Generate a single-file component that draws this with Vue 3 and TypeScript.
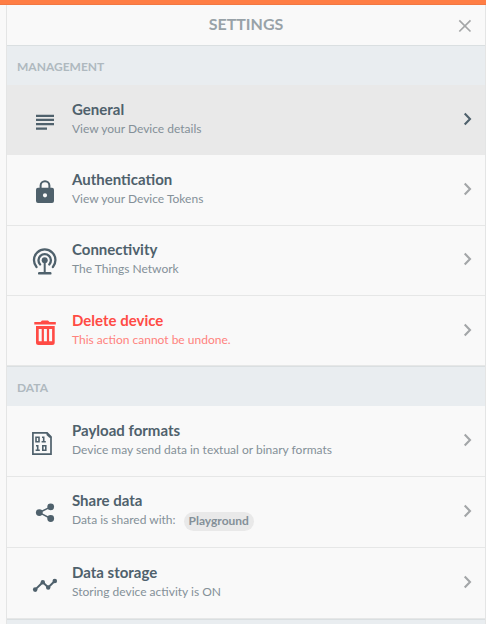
<script setup lang="ts">
interface Item {
  id: string
  title: string
  text: string
  height: number
  top: number
  badge?: string
  active?: boolean
  danger?: boolean
}

interface Group {
  label: string
  items: Item[]
}

const groups: Group[] = [
  {
    label: 'Management',
    items: [
      { id: 'general', title: 'General', text: 'View your Device details', height: 70, top: 15, active: true },
      { id: 'auth', title: 'Authentication', text: 'View your Device Tokens', height: 71, top: 15 },
      { id: 'connectivity', title: 'Connectivity', text: 'The Things Network', height: 70, top: 14 },
      { id: 'delete', title: 'Delete device', text: 'This action cannot be undone.', height: 70, top: 15, danger: true },
    ],
  },
  {
    label: 'Data',
    items: [
      { id: 'payload', title: 'Payload formats', text: 'Device may send data in textual or binary formats', height: 71, top: 15 },
      { id: 'share', title: 'Share data', text: 'Data is shared with:', height: 71, top: 14, badge: 'Playground' },
      { id: 'storage', title: 'Data storage', text: 'Storing device activity is ON', height: 71, top: 15 },
    ],
  },
]
</script>

<template>
  <div class="page">
    <div class="accent"></div>
    <main class="panel">
      <header class="header">
        <h1>SETTINGS</h1>
        <svg class="close" width="14" height="14" viewBox="0 0 14 14">
          <path d="M1.3 1.3 12.5 12.5M12.5 1.3 1.3 12.5" />
        </svg>
      </header>
      <section v-for="group in groups" :key="group.label">
        <h2 class="label">{{ group.label }}</h2>
        <div
          v-for="item in group.items"
          :key="item.id"
          class="row"
          :class="[item.id, { active: item.active, danger: item.danger }]"
          :style="{ height: item.height + 'px' }"
        >
          <svg class="icon" width="32" height="40" viewBox="0 0 32 40">
            <path v-if="item.id === 'general'" d="M8 12.7h18v2.2H8zM8 16.8h18V19H8zM8 21.1h18v2.2H8zM8 25.6h11v2.2H8z" />
            <g v-else-if="item.id === 'auth'">
              <path class="line" d="M12.6 17v-3.4a4.4 4.4 0 0 1 8.8 0V17" />
              <path fill-rule="evenodd" d="M10 15.7h14a2 2 0 0 1 2 2v11.2a2 2 0 0 1-2 2H10a2 2 0 0 1-2-2V17.7a2 2 0 0 1 2-2zm7 5.5a2.1 2.1 0 1 0 0 4.2 2.1 2.1 0 0 0 0-4.2z" />
            </g>
            <g v-else-if="item.id === 'connectivity'">
              <path class="line wide" d="M8.5 24A10.7 10.7 0 1 1 24.9 24" />
              <path class="line wide" d="M12.1 21.5A6.2 6.2 0 1 1 21.3 21.5" />
              <circle cx="16.7" cy="17.3" r="3" />
              <path d="M15.7 18h2v11h-2z" />
              <rect x="10" y="29" width="13.5" height="2.6" rx="1.2" />
            </g>
            <g v-else-if="item.id === 'delete'">
              <path d="M14 7.5h6l1.5 1.5h6.3v2.5H6.3V9h6.2z" />
              <path fill-rule="evenodd" d="M8 13h18.7v16.5a2.5 2.5 0 0 1-2.5 2.5H10.5A2.5 2.5 0 0 1 8 29.5zm2.700 3v12.300h3V16zm5.200 0v12.300h3V16zm5.200 0v12.300h3V16z" />
            </g>
            <g v-else-if="item.id === 'payload'">
              <path class="line thin" d="M4.900 9.900h14.200l3.900 3.900v17.300H4.900z" />
              <path d="M18.500 9.500 23.700 14.700h-2.400l-2.800-2.800z" />
              <path class="line bits" d="M8 14.200h3v4.600H8zM14 14.200h1.700v4.600M13.600 18.800h4.200M8 22.700h1.700v4.600M7.600 27.300h4.200M14.800 22.700h3v4.600h-3z" />
            </g>
            <g v-else-if="item.id === 'share'">
              <path class="line link" d="M22.700 12.800 11.300 18.600 22.700 24.500" />
              <circle cx="11.300" cy="18.600" r="3.400" />
              <circle cx="22.700" cy="12.800" r="3.400" />
              <circle cx="22.700" cy="24.500" r="3.400" />
            </g>
            <g v-else>
              <path class="line" d="M7.200 24.600 14.800 17.200 20.200 22.400 26.800 16" />
              <circle cx="7.200" cy="24.600" r="2.300" />
              <circle cx="14.800" cy="17.200" r="2.200" />
              <circle cx="20.200" cy="22.500" r="2.200" />
              <circle cx="26.800" cy="16" r="2.300" />
            </g>
          </svg>
          <div class="copy" :style="{ paddingTop: item.top + 'px' }">
            <h3>{{ item.title }}</h3>
            <p>{{ item.text }}<span v-if="item.badge" class="badge">{{ item.badge }}</span></p>
          </div>
          <svg class="chevron" width="9" height="14" viewBox="0 0 9 14">
            <path d="M1.700 1.500 7 7 1.700 12.500" />
          </svg>
        </div>
      </section>
      <div class="next"></div>
    </main>
  </div>
</template>

<style>
body {
  margin: 0;
  background: #f9f9f9;
}
</style>

<style scoped>
.page {
  height: 624px;
  overflow: hidden;
  background: #f9f9f9;
  font-family: Lato, sans-serif;
  color: #4f616c;
}
.accent {
  height: 5px;
  box-sizing: border-box;
  background: #ff7e45;
  border-bottom: 1px solid #f27843;
}
.panel {
  height: 619px;
  margin-left: 6px;
  box-sizing: border-box;
  border: solid #e4e5e5;
  border-width: 0 1px;
}
.header {
  display: grid;
  grid-template-columns: 1fr auto 1fr;
  align-items: center;
  height: 40px;
}
h1, h2, h3, p {
  margin: 0;
}
h1 {
  grid-column: 2;
  padding-bottom: 2px;
  font-size: 16px;
  line-height: 20px;
  font-weight: 700;
  color: #98a2a8;
}
.close {
  justify-self: end;
  margin: 2px 13px 0 0;
}
.close path {
  fill: none;
  stroke: #a4a6a7;
  stroke-width: 1.7;
}
.label {
  height: 40px;
  box-sizing: border-box;
  padding: 0 10px;
  border-top: 1px solid #dadfe1;
  background: #e9edf0;
  font-size: 12px;
  line-height: 41px;
  font-weight: 700;
  text-transform: uppercase;
  color: #afb9bf;
}
.row {
  display: flex;
  box-sizing: border-box;
  padding: 0 13px 0 21px;
  border-bottom: 1px solid #e6e7e7;
}
.row.active {
  background: #e9e9e9;
  border-color: #e9e9e9;
}
.icon {
  flex: none;
  margin: 17px 12px 0 0;
  fill: #4f616c;
  stroke: #4f616c;
  stroke-width: 0;
}
.line {
  fill: none;
  stroke-width: 2;
}
.wide {
  stroke-width: 2.3;
  stroke-linecap: round;
}
.thin {
  stroke-width: 1.7;
}
.bits {
  stroke-width: 1.6;
}
.link {
  stroke-width: 1.5;
}
.copy {
  flex: 1;
}
h3 {
  padding-bottom: 2px;
  font-size: 15px;
  line-height: 18px;
  font-weight: 700;
}
p {
  display: flex;
  font-size: 12px;
  line-height: 18px;
  white-space: nowrap;
  color: #849098;
}
.badge {
  height: 19px;
  margin: 1px 0 0 8px;
  padding: 0 5px;
  border-radius: 10px;
  background: #e9e9e9;
  line-height: 17px;
  font-weight: 700;
}
.chevron {
  flex: none;
  margin-top: 27px;
}
.connectivity .chevron {
  margin-top: 26px;
}
.chevron path {
  fill: none;
  stroke: #a3a6a8;
  stroke-width: 2.1;
}
.active .chevron path {
  stroke: #4f616c;
}
.danger h3 {
  color: #ff4b45;
}
.danger p {
  color: #ff827d;
}
.danger .icon {
  fill: #ff4b45;
}
.next {
  height: 5px;
  border-top: 1px solid #dadfe1;
  background: #e9edf0;
}
</style>
